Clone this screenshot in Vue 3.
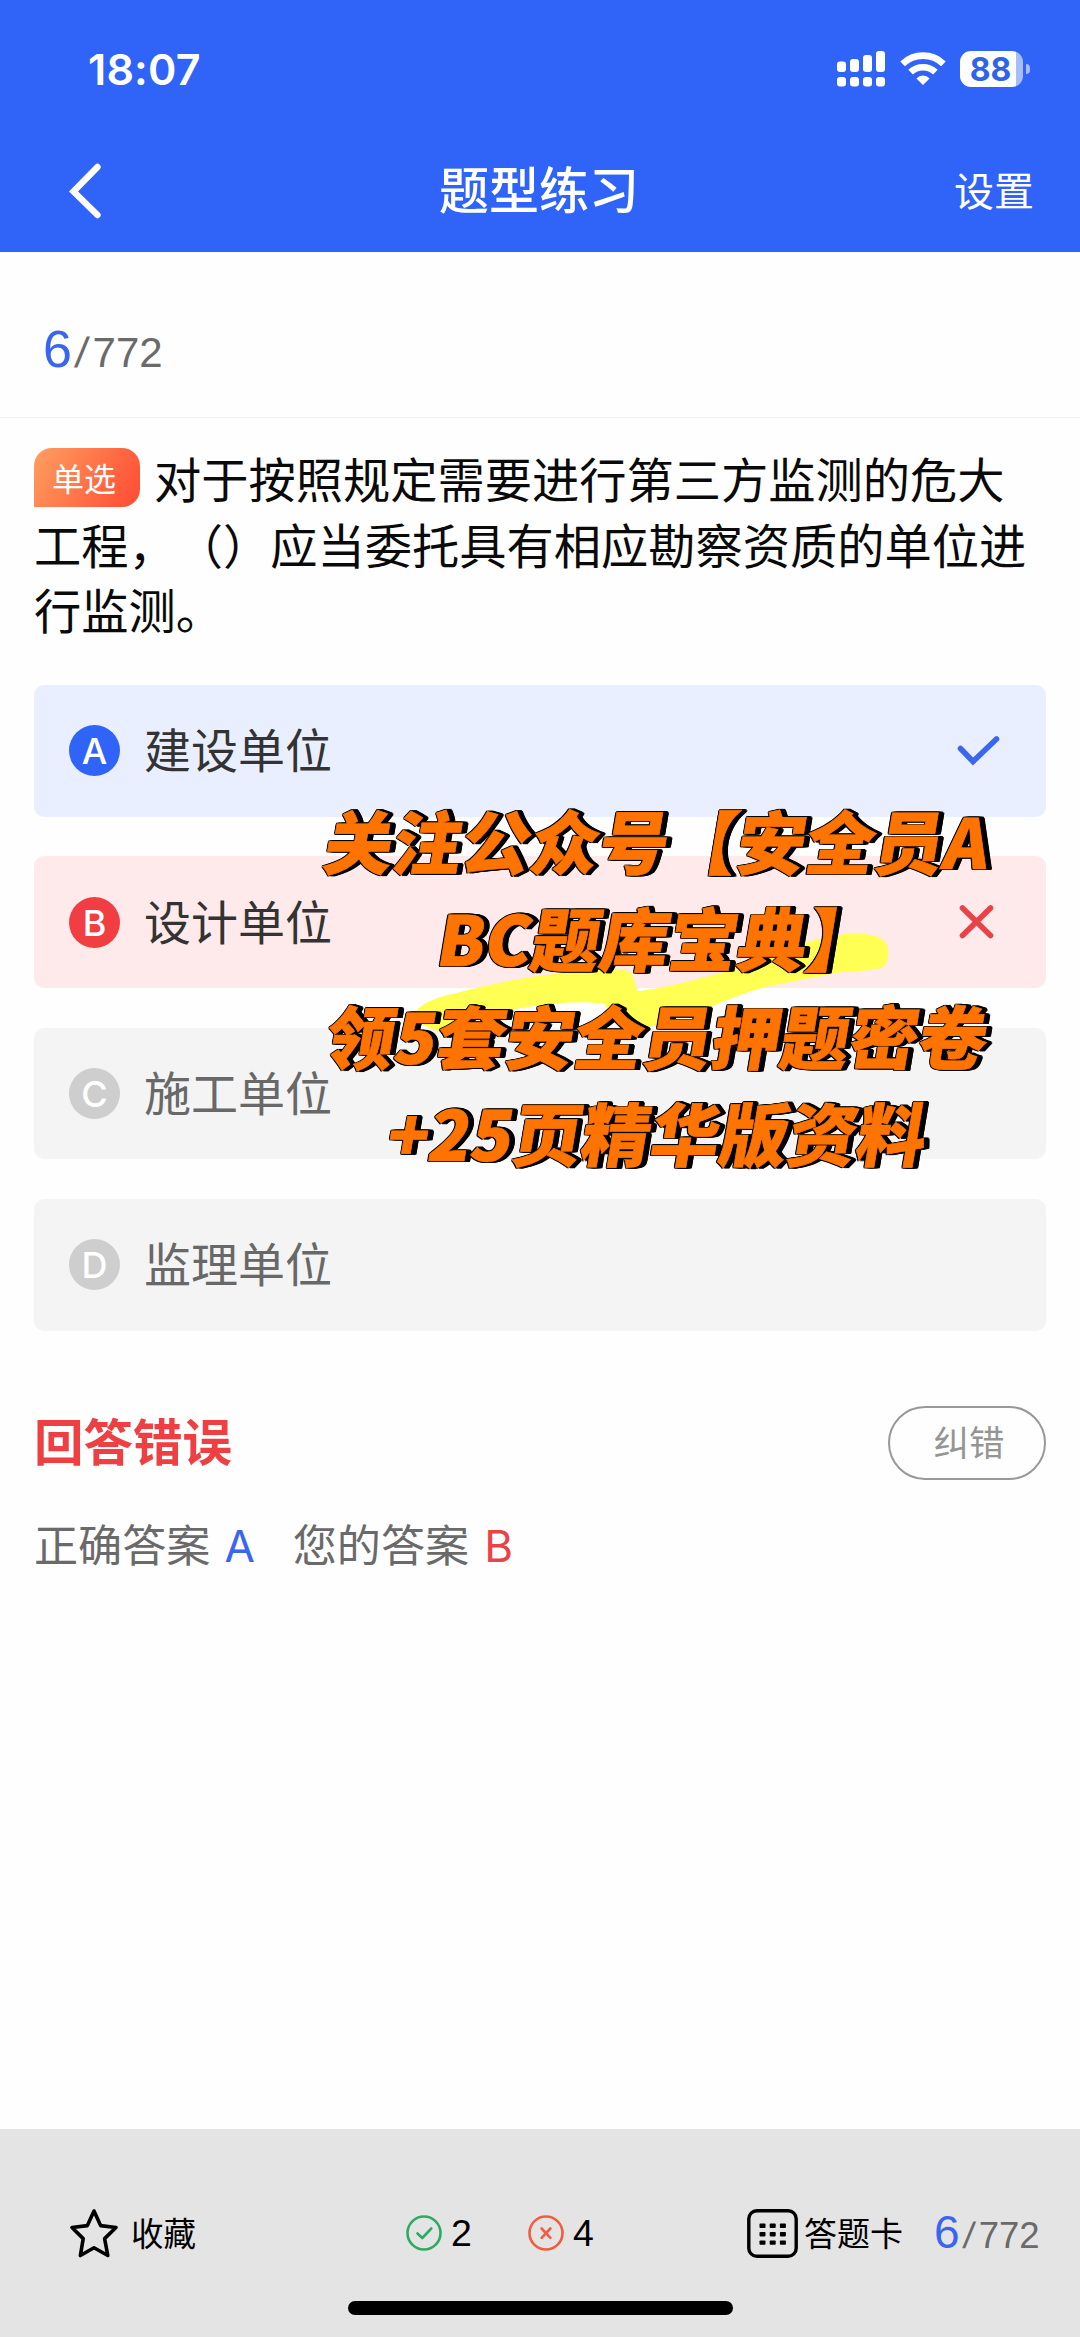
<script setup>
const options = [
  { key: 'A', text: '建设单位', state: 'right' },
  { key: 'B', text: '设计单位', state: 'wrong' },
  { key: 'C', text: '施工单位', state: 'idle' },
  { key: 'D', text: '监理单位', state: 'idle' },
]
const questionLines = [
  '对于按照规定需要进行第三方监测的危大',
  '工程，（）应当委托具有相应勘察资质的单位进',
  '行监测。',
]
const promoLines = ['关注公众号【安全员A', 'BC题库宝典】', '领5套安全员押题密卷', '+25页精华版资料']
const signal = [
  { x: 0, y: 10.5 },
  { x: 13, y: 8 },
  { x: 26, y: 4 },
  { x: 39, y: 0 },
]
const cells = [0, 1, 2, 3, 4, 5, 6, 7, 8]
</script>

<template>
  <div class="page">
    <header class="header">
      <div class="status">
        <span class="time">18:07</span>
        <svg class="signal" width="49" height="36" viewBox="0 0 49 36" fill="#fff">
          <template v-for="b in signal" :key="b.x">
            <rect :x="b.x" :y="b.y" width="9" :height="21 - b.y" rx="3" />
            <rect :x="b.x" y="26" width="9" height="9.5" rx="3" />
          </template>
        </svg>
        <svg class="wifi" width="46" height="36" viewBox="0 0 46 36" fill="none" stroke="#fff" stroke-width="6.6">
          <path d="M2.6 12.8A29.5 29.5 0 0 1 43.4 12.8" />
          <path d="M10.6 21.2A18 18 0 0 1 35.4 21.2" />
          <path d="M16.4 27.4A9.2 9.2 0 0 1 29.6 27.4L23 34Z" fill="#fff" stroke="none" />
        </svg>
        <span class="battery"><span class="level">88</span></span>
        <span class="nub"></span>
      </div>
      <nav class="nav">
        <svg class="back" width="34" height="56" viewBox="0 0 34 56" fill="none" stroke="#fff" stroke-width="6.4" stroke-linecap="round">
          <path d="M29.5 4L5.5 28.5L29.5 52" />
        </svg>
        <h1>题型练习</h1>
        <span class="settings">设置</span>
      </nav>
    </header>

    <section class="progress">
      <span class="counter"><b>6</b><i>/</i>772</span>
    </section>

    <main class="content">
      <p class="question">
        <span class="badge">单选</span><template v-for="(l, i) in questionLines" :key="i">{{ l }}<br /></template>
      </p>

      <div class="answers">
        <div v-for="o in options" :key="o.key" class="option" :class="o.state">
          <span class="letter">{{ o.key }}</span>
          <span class="label">{{ o.text }}</span>
          <svg v-if="o.state === 'right'" class="mark" width="48" height="40" viewBox="0 0 48 40" fill="none" stroke="#3b67f0" stroke-width="5.6" stroke-linecap="round">
            <path d="M7.5 17.5L20 30.5L43.5 8" />
          </svg>
          <svg v-if="o.state === 'wrong'" class="mark" width="48" height="40" viewBox="0 0 48 40" fill="none" stroke="#ea4347" stroke-width="5.6" stroke-linecap="round">
            <path d="M9.5 6L37.5 33.5M37.5 6L9.5 33.5" />
          </svg>
        </div>

        <div class="promo">
          <svg class="brush" width="490" height="110" viewBox="0 0 490 110">
            <path d="M6 93C12 84 24 78 44 74C80 64 110 58 160 52C190 49 215 48 221 52C226 58 226 66 229 71C250 70 300 56 345 44C375 30 400 19 430 15C455 11 478 15 479 29C480 44 476 48 466 49C450 52 440 51 425 53C400 60 370 62 340 72C310 82 300 90 270 95C255 99 246 108 228 110C212 106 198 94 196 84C170 80 140 84 112 88C70 96 50 108 30 112C20 108 4 102 6 93Z" fill="#ffff54" />
          </svg>
          <p v-for="l in promoLines" :key="l">{{ l }}</p>
        </div>
      </div>

      <div class="result">
        <strong>回答错误</strong>
        <span class="report">纠错</span>
      </div>
      <div class="compare">
        <span>正确答案</span><em class="blue">A</em><span>您的答案</span><em class="red">B</em>
      </div>
    </main>

    <footer class="footer">
      <div class="tools">
        <svg class="star" width="50" height="52" viewBox="0 0 50 52" fill="none" stroke="#000" stroke-width="3.6" stroke-linejoin="round">
          <path d="M25 4L31.6 18.6L47 20.5L35.6 31.6L38.8 48.5L25 40.8L11.4 48.5L14.2 31.6L3 20.5L18.4 18.6Z" />
        </svg>
        <span class="fav">收藏</span>
        <svg class="ok" width="36" height="36" viewBox="0 0 36 36" fill="none" stroke="#2cac62" stroke-width="2.6" stroke-linecap="round" stroke-linejoin="round">
          <circle cx="18" cy="18" r="16.5" />
          <path d="M11.5 18.5L16.3 23L25.3 13.5" />
        </svg>
        <span class="num">2</span>
        <svg class="bad" width="36" height="36" viewBox="0 0 36 36" fill="none" stroke="#f45c3f" stroke-width="2.6" stroke-linecap="round">
          <circle cx="18" cy="18" r="16.5" />
          <path d="M13.6 13.5L22.4 22.8M22.4 13.5L13.6 22.8" />
        </svg>
        <span class="num">4</span>
        <svg class="grid" width="51" height="49" viewBox="0 0 51 49">
          <rect x="1.8" y="1.8" width="47.4" height="45.4" rx="8" fill="none" stroke="#000" stroke-width="3.4" />
          <rect v-for="c in cells" :key="c" :x="12.5 + (c % 3) * 10.2" :y="14.6 + Math.floor(c / 3) * 8.4" width="6" height="4.4" rx="0.8" />
        </svg>
        <span class="card">答题卡</span>
        <span class="counter small"><b>6</b><i>/</i>772</span>
      </div>
      <div class="home"></div>
    </footer>
  </div>
</template>

<style>
body {
  margin: 0;
  background: #fefefe;
}
</style>

<style scoped>
.page {
  width: 1080px;
  height: 2337px;
  display: flex;
  flex-direction: column;
  overflow: hidden;
  background: #fefefe;
  font-family: "Noto Sans CJK SC", sans-serif;
  text-spacing-trim: space-all;
}
svg {
  display: block;
  flex: none;
}
.header {
  height: 252px;
  flex: none;
  background: #3064f8;
  color: #fff;
}
.status {
  height: 137px;
  box-sizing: border-box;
  padding: 0 50px 0 88px;
  display: flex;
  align-items: center;
}
.time {
  flex: 1;
  font: 600 43px/50px Inter, sans-serif;
  letter-spacing: 0.2px;
}
.wifi {
  margin-left: 14px;
}
.battery {
  margin-left: 14px;
  width: 63px;
  height: 36px;
  border-radius: 11px;
  background: linear-gradient(90deg, #fff 56px, #a6bdfb 56px);
}
.level {
  display: block;
  width: 61px;
  text-align: center;
  color: #3064e8;
  font: 700 32px/37px Inter, sans-serif;
}
.nub {
  margin-left: 3px;
  width: 4px;
  height: 10px;
  border-radius: 0 5px 5px 0;
  background: #a6bdfb;
}
.nav {
  height: 108px;
  padding: 0 46px 0 68px;
  display: flex;
  align-items: center;
}
.nav h1 {
  margin: -9px 0 0 337px;
  font-size: 50px;
  font-weight: 500;
  line-height: 60px;
}
.settings {
  margin-left: auto;
  margin-top: -5px;
  font-size: 40px;
  line-height: 50px;
}
.progress {
  height: 166px;
  flex: none;
  box-sizing: border-box;
  padding: 67px 0 0 43px;
  border-bottom: 1px solid #f2f2f4;
}
.counter {
  display: flex;
  align-items: baseline;
  font: 42px/60px "Liberation Sans", Arial, sans-serif;
  color: #6a6a6a;
}
.counter b {
  font-size: 52px;
  font-weight: 400;
  color: #3a65ee;
}
.counter i {
  margin: 0 5px 0 4px;
  font-style: normal;
  transform: skewX(-8deg);
}
.content {
  flex: 1;
  padding: 27px 34px 0;
}
.question {
  margin: 0;
  white-space: nowrap;
  font-size: 47.25px;
  line-height: 65.5px;
  color: #0a0a0a;
}
.badge {
  display: inline-block;
  box-sizing: border-box;
  width: 106px;
  height: 59px;
  margin-right: 14px;
  padding-right: 6px;
  border-radius: 18px 18px 18px 0;
  background: linear-gradient(120deg, #ff9f60, #ff4a32);
  color: #fff;
  font-size: 32px;
  line-height: 59px;
  text-align: center;
  vertical-align: 7px;
}
.answers {
  position: relative;
  margin-top: 43.5px;
  display: flex;
  flex-direction: column;
  gap: 39.6px;
}
.option {
  height: 131.7px;
  box-sizing: border-box;
  padding: 0 45px 0 35px;
  border-radius: 10px;
  display: flex;
  align-items: center;
  background: #f4f4f4;
  color: #686868;
}
.right {
  background: #eaefff;
  color: #333;
}
.wrong {
  background: #feeaea;
  color: #333;
}
.letter {
  width: 51px;
  height: 51px;
  border-radius: 50%;
  background: #cecece;
  color: #fff;
  text-align: center;
  font: 500 36px/52px Inter, sans-serif;
}
.right .letter {
  background: #3064f8;
}
.wrong .letter {
  background: #f13e42;
}
.label {
  flex: 1;
  margin: -5px 0 0 24px;
  font-size: 47px;
  line-height: 60px;
}
.promo {
  position: absolute;
  left: 274px;
  top: 106px;
  width: 700px;
}
.promo p {
  position: relative;
  margin: 0;
  text-align: center;
  white-space: nowrap;
  font-size: 68.8px;
  font-weight: 900;
  line-height: 97.4px;
  color: #ff7300;
  -webkit-text-stroke: 0.7px #ff7300;
  transform: skewX(-9.5deg);
  text-shadow: -1px -1px #000, 0 -1.4px #000, 1px -1px #000, -1.4px 0 #000, -1px 1px #000,
    0 1.4px #000, 2px 1px #000, 2px -1px #000, 3px 1px #000, 3px -1px #000, 4px 1px #000,
    4px -1px #000, 5px 1px #000, 5px -1px #000, 6px 1px #000, 6px 0 #000;
}
.brush {
  position: absolute;
  left: 101px;
  top: 129px;
  overflow: visible;
}
.result {
  margin-top: 75px;
  height: 74px;
  display: flex;
  align-items: center;
  justify-content: space-between;
}
.result strong {
  margin-top: -5px;
  font-size: 49.5px;
  line-height: 60px;
  font-weight: 700;
  color: #ee3f43;
}
.report {
  width: 158px;
  height: 74px;
  box-sizing: border-box;
  padding-left: 4px;
  border: 2.4px solid #989898;
  border-radius: 37px;
  color: #959595;
  font-size: 35.5px;
  line-height: 66px;
  text-align: center;
}
.compare {
  margin-top: 33px;
  display: flex;
  align-items: baseline;
  font-size: 44.1px;
  line-height: 60px;
  color: #6a6a6a;
}
.compare em {
  font: 400 44px/60px Inter, sans-serif;
}
.blue {
  margin: 0 38px 0 14px;
  color: #3a65ee;
}
.red {
  margin-left: 15px;
  color: #ea4347;
}
.footer {
  height: 208px;
  flex: none;
  background: #e4e4e4;
}
.tools {
  height: 172px;
  box-sizing: border-box;
  padding: 36px 40px 0 69px;
  display: flex;
  align-items: center;
}
.fav {
  width: 64px;
  margin: -3px 0 0 12px;
  font-size: 32.5px;
  line-height: 48px;
  white-space: nowrap;
}
.ok {
  margin-left: 211px;
}
.num {
  width: 22px;
  margin-left: 9px;
  font: 37.5px/44px "Liberation Sans", Arial, sans-serif;
}
.bad {
  margin-left: 55px;
}
.grid {
  margin-left: 152px;
}
.card {
  margin: -3px 0 0 6px;
  font-size: 33px;
  line-height: 48px;
}
.small {
  margin: 2px 0 0 31px;
  font-size: 36.5px;
  line-height: 48px;
}
.small b {
  font-size: 46px;
}
.small i {
  margin: 0 5px 0 4px;
}
.home {
  width: 385px;
  height: 14px;
  margin-left: 348px;
  border-radius: 7px;
  background: #000;
}
</style>
